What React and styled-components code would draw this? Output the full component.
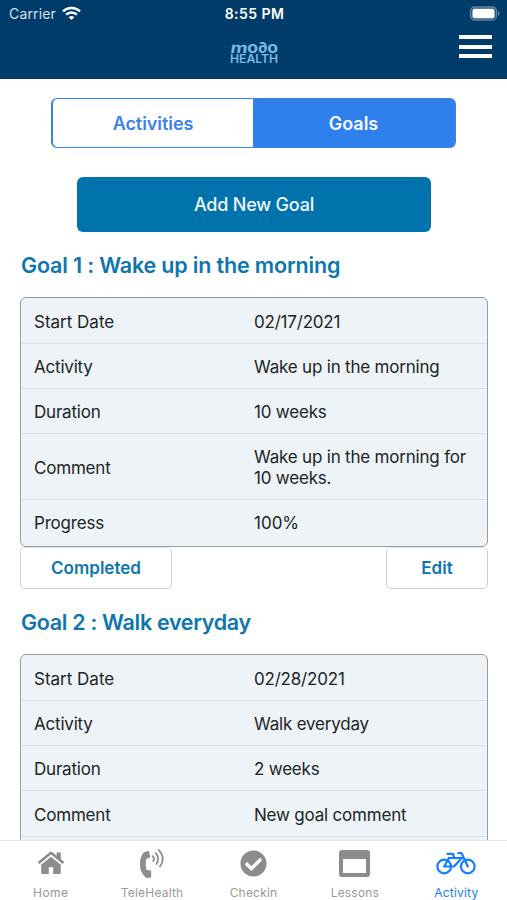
import React from "react";
import styled, { createGlobalStyle } from "styled-components";
import { FaCheckCircle } from "react-icons/fa";

const GlobalStyle = createGlobalStyle`
  * { box-sizing: border-box; }
  body { margin: 0; background: #fff; overflow: hidden; }
  button { font: inherit; padding: 0; }
`;

const Screen = styled.div`
  width: 507px;
  height: 900px;
  display: flex;
  flex-direction: column;
  overflow: hidden;
  font-family: Inter, "Liberation Sans", sans-serif;
  color: #202427;
  background: #fff;
`;

const Header = styled.header`
  flex: 0 0 79px;
  background: #003c69;
  color: #fff;
`;

const StatusBar = styled.div`
  height: 28px;
  padding: 0 7px 0 9px;
  display: grid;
  grid-template-columns: 1fr auto 1fr;
  align-items: center;
`;

const Carrier = styled.div`
  display: flex;
  align-items: center;
  gap: 6px;
  margin-top: -1px;
  font-size: 14px;
  letter-spacing: 0.15px;
  color: #d5e1eb;
`;

const Clock = styled.div`
  margin-top: -1px;
  font-size: 14px;
  font-weight: 600;
  letter-spacing: 0.45px;
`;

const BatteryIcon = styled.svg`
  justify-self: end;
  margin-top: -2px;
`;

const NavBar = styled.div`
  height: 51px;
  padding: 0 15px;
  display: grid;
  grid-template-columns: 1fr auto 1fr;
  align-items: start;
`;

const Logo = styled.svg`
  grid-column: 2;
  margin-top: 9px;
`;

const MenuButton = styled.button`
  justify-self: end;
  width: 33px;
  height: 23px;
  margin-top: 7px;
  border: 0;
  background: none;
  display: flex;
  flex-direction: column;
  justify-content: space-between;
`;

const MenuLine = styled.span`
  height: 4px;
  width: 33px;
  background: #fff;
`;

const Content = styled.main`
  flex: 1 1 0;
  min-height: 0;
  overflow: hidden;
  padding: 19px 19px 0 20px;
`;

const Segments = styled.div`
  width: 405px;
  height: 50px;
  margin-left: 31px;
  display: grid;
  grid-template-columns: 200px 1fr;
  border: 2px solid #3a81ed;
  border-width: 1px 2px;
  border-radius: 6px;
  background: #2f80ed;
  overflow: hidden;
`;

const Segment = styled.button`
  border: 0;
  font-size: 18px;
  font-weight: 600;
  letter-spacing: ${(p) => p.$tracking}px;
  color: ${(p) => (p.$active ? "#f5f9ff" : "#3a81e8")};
  background: ${(p) => (p.$active ? "#2f80ed" : "#fff")};
`;

const AddButton = styled.button`
  display: block;
  width: 354px;
  height: 55px;
  margin: 29px 0 0 57px;
  border: 0;
  border-radius: 6px;
  background: #0073ad;
  color: #f0f8fc;
  font-size: 18px;
  font-weight: 500;
  letter-spacing: -0.2px;
`;

const Goal = styled.section`
  margin-top: ${(p) => p.$gap}px;
`;

const GoalTitle = styled.h2`
  margin: 0 0 17px 1px;
  height: 30px;
  line-height: 30px;
  font-size: 21.5px;
  font-weight: 600;
  letter-spacing: ${(p) => p.$tracking}px;
  color: #0d76ad;
  white-space: nowrap;
`;

const Details = styled.dl`
  margin: 0;
  border: 1.5px solid #969b9e;
  border-radius: 6px;
  background: #edf3f6;
`;

const Row = styled.div`
  height: ${(p) => p.$height}px;
  display: grid;
  grid-template-columns: 220px 1fr;
  align-items: center;
  padding: 3px 0 0 13px;
  font-size: 17px;
  line-height: 21px;
  border-bottom: 1px solid #dbe2e5;
  &:last-child { border-bottom: 0; padding-top: 1px; }
`;

const Label = styled.dt`
  letter-spacing: ${(p) => p.$tracking}px;
`;

const Value = styled.dd`
  margin: 0;
  white-space: pre-line;
  letter-spacing: ${(p) => p.$tracking}px;
`;

const Actions = styled.div`
  display: flex;
  justify-content: space-between;
`;

const ActionButton = styled.button`
  width: ${(p) => p.$width}px;
  height: 42px;
  border: 1.5px solid #cdcfd0;
  border-top-color: #e3e5e6;
  border-radius: 5px;
  background: #fff;
  color: #0d76ad;
  font-size: 17px;
  font-weight: 600;
`;

const TabBar = styled.nav`
  flex: 0 0 60px;
  display: grid;
  grid-template-columns: repeat(5, 1fr);
  grid-template-rows: 59px;
  border-top: 1px solid #e2e4e5;
  background: #fff;
`;

const Tab = styled.button`
  border: 0;
  background: none;
  display: flex;
  flex-direction: column;
  align-items: center;
  color: ${(p) => (p.$active ? "#147efb" : "#8c8c8c")};
`;

const TabIcon = styled.span`
  height: 44px;
  display: flex;
  align-items: center;
  justify-content: center;
`;

const TabLabel = styled.span`
  font-size: 12px;
  line-height: 15px;
  letter-spacing: ${(p) => p.$tracking}px;
  color: ${(p) => (p.$active ? "#147efb" : "#999")};
`;

const GOALS = [
  {
    title: "Goal 1 : Wake up in the morning",
    tracking: -0.16,
    gap: 18,
    rows: [
      ["Start Date", "02/17/2021", 46],
      ["Activity", "Wake up in the morning", 45],
      ["Duration", "10 weeks", 45],
      ["Comment", "Wake up in the morning for\n10 weeks.", 66],
      ["Progress", "100%", 46],
    ],
    actions: true,
  },
  {
    title: "Goal 2 : Walk everyday",
    tracking: -0.31,
    gap: 18,
    rows: [
      ["Start Date", "02/28/2021", 46],
      ["Activity", "Walk everyday", 45],
      ["Duration", "2 weeks", 45],
      ["Comment", "New goal comment", 46],
      ["Progress", "0%", 46],
    ],
  },
];

function HomeIcon() {
  return (
    <svg width="28" height="24" viewBox="0 0 28 24" fill="currentColor">
      <path d="M14 5.800 4.200 13.800v8q0 1.300 1.300 1.300h6.300v-6.800h4.400v6.800h6.300q1.300 0 1.300-1.300v-8z" />
      <path d="M1.600 12 14 1.800 26.400 12" fill="none" stroke="currentColor" strokeWidth="2.500" strokeLinejoin="round" />
      <path d="M19.600 1.500h4.200v8.500l-4.200-3.500z" />
    </svg>
  );
}

function PhoneIcon() {
  return (
    <svg width="26" height="31" viewBox="0 0 26 31">
      <path
        d="M5 4.200 8.800 3q1.100-.2 1.400.9l1 4.400q.1 1-.8 1.400L7.100 11q-.9 5.500.4 11l3.500.3q1 .2 1.100 1.200l.1 4.800q-.1 1.200-1.300 1.400l-3.600.3Q1 25.500 1 16.800 1 7.500 5 4.200z"
        fill="currentColor"
      />
      <g fill="none" stroke="currentColor" strokeWidth="1.800" strokeLinecap="round">
        <path d="M13.700 8.200q2.200 2 .6 5" />
        <path d="M16.700 5.200q4.400 4.800.8 10.700" />
        <path d="M19.800 2q7.200 8 1.200 16.600" />
      </g>
    </svg>
  );
}

function WindowIcon() {
  return (
    <svg width="31" height="27" viewBox="0 0 31 27">
      <path
        fill="currentColor"
        fillRule="evenodd"
        d="M3 0h25a3 3 0 0 1 3 3v21a3 3 0 0 1-3 3H3a3 3 0 0 1-3-3V3a3 3 0 0 1 3-3zM4 9v14h23V9z"
      />
    </svg>
  );
}

function BicycleIcon() {
  return (
    <svg width="40" height="24" viewBox="0 0 40 24" fill="none" stroke="currentColor" strokeWidth="2.200" strokeLinecap="round" strokeLinejoin="round">
      <circle cx="8.200" cy="15.500" r="6.800" />
      <circle cx="31.800" cy="15.500" r="6.800" />
      <path d="M8.200 15.500h9.800l8.800-9.500M8.200 15.500 13 7" />
      <path d="M13 7h13" />
      <path d="M11.500 2.800h5.500l1 3.500M22.300 2h3.200l6.300 13.500" />
    </svg>
  );
}

const TABS = [
  { name: "Home", icon: <HomeIcon />, tracking: 0.4 },
  { name: "TeleHealth", icon: <PhoneIcon />, tracking: 0.2 },
  { name: "Checkin", icon: <FaCheckCircle size={27} />, tracking: 0.2 },
  { name: "Lessons", icon: <WindowIcon />, tracking: 0.2 },
  { name: "Activity", icon: <BicycleIcon />, tracking: 0.2, active: true },
];

function WifiIcon() {
  return (
    <svg width="19" height="15" viewBox="0 0 19 15" fill="none" stroke="#fff" strokeWidth="2.500">
      <path d="M1 5.400C5.700.7 13.300.7 18 5.400" />
      <path d="M4.100 8.700c3-3 7.800-3 10.800 0" />
      <path d="M6.700 11.200c1.600-1.500 4-1.500 5.600 0L9.500 14z" fill="#fff" stroke="none" />
    </svg>
  );
}

function Battery() {
  return (
    <BatteryIcon width="31" height="15" viewBox="0 0 31 15">
      <rect x="1.500" y="1" width="26" height="13" rx="4" fill="#245681" stroke="#5f84a1" strokeWidth="1.300" />
      <rect x="3.500" y="2.800" width="22" height="9.400" rx="2" fill="#fff" />
      <path d="M29 5c2 .8 2 4.200 0 5z" fill="#5f84a1" />
    </BatteryIcon>
  );
}

function ModoLogo() {
  return (
    <Logo width="50" height="32" viewBox="0 0 50 32" fill="#78b8ea" fontFamily="Inter, sans-serif">
      <g fontSize="15" fontWeight="700">
        <text transform="translate(1 16) skewX(-8)" textLength="17" lengthAdjust="spacingAndGlyphs">m</text>
        <text x="18.200" y="16" textLength="10.800" lengthAdjust="spacingAndGlyphs">o</text>
        <text x="28.500" y="16" textLength="10.500" lengthAdjust="spacingAndGlyphs">∂</text>
        <text x="38.200" y="16" textLength="10.800" lengthAdjust="spacingAndGlyphs">o</text>
      </g>
      <text x="1" y="26" fontSize="11.800" fontWeight="600" textLength="48" lengthAdjust="spacingAndGlyphs">HEALTH</text>
    </Logo>
  );
}

export default function App() {
  return (
    <Screen>
      <GlobalStyle />
      <Header>
        <StatusBar>
          <Carrier>Carrier <WifiIcon /></Carrier>
          <Clock>8:55 PM</Clock>
          <Battery />
        </StatusBar>
        <NavBar>
          <ModoLogo />
          <MenuButton aria-label="Menu">
            <MenuLine /><MenuLine /><MenuLine />
          </MenuButton>
        </NavBar>
      </Header>
      <Content>
        <Segments>
          <Segment $tracking={-0.05}>Activities</Segment>
          <Segment $active $tracking={-0.05}>Goals</Segment>
        </Segments>
        <AddButton>Add New Goal</AddButton>
        {GOALS.map((goal) => (
          <Goal key={goal.title} $gap={goal.gap}>
            <GoalTitle $tracking={goal.tracking}>{goal.title}</GoalTitle>
            <Details>
              {goal.rows.map(([label, value, height]) => (
                <Row key={label} $height={height}>
                  <Label $tracking={label === "Start Date" ? 0 : -0.2}>{label}</Label>
                  <Value $tracking={value === "100%" ? 0 : -0.2}>{value}</Value>
                </Row>
              ))}
            </Details>
            {goal.actions && (
              <Actions>
                <ActionButton $width={152}>Completed</ActionButton>
                <ActionButton $width={102}>Edit</ActionButton>
              </Actions>
            )}
          </Goal>
        ))}
      </Content>
      <TabBar>
        {TABS.map((tab) => (
          <Tab key={tab.name} $active={tab.active}>
            <TabIcon>{tab.icon}</TabIcon>
            <TabLabel $active={tab.active} $tracking={tab.tracking}>{tab.name}</TabLabel>
          </Tab>
        ))}
      </TabBar>
    </Screen>
  );
}
